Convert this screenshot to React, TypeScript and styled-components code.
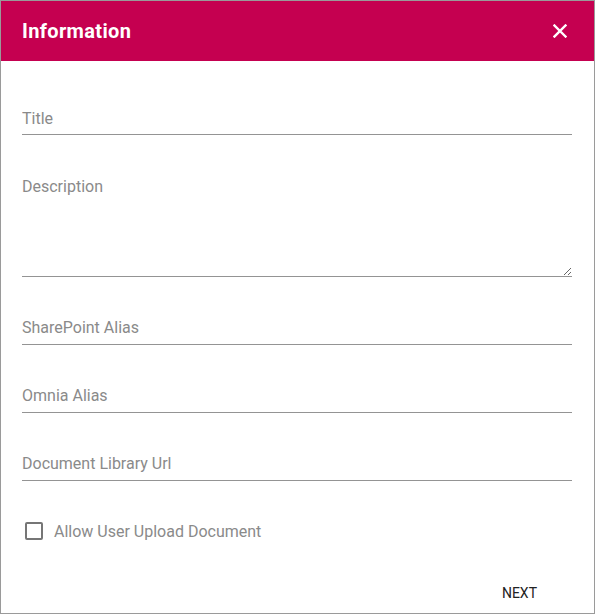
import styled, { createGlobalStyle } from "styled-components";

const GlobalStyle = createGlobalStyle`
    html, body {
        margin: 0;
        padding: 0;
        background: #ffffff;
        font-family: Roboto, "Liberation Sans", sans-serif;
    }
    * {
        box-sizing: border-box;
    }
`;

const fields = ["SharePoint Alias", "Omnia Alias", "Document Library Url"];

const App = () => {
    return (
        <>
            <GlobalStyle />
            <Dialog>
                <Header>
                    <HeaderTitle>Information</HeaderTitle>
                    <CloseBtn aria-label="close">
                        <svg width="14" height="14" viewBox="0 0 14 14">
                            <path
                                d="M1.5 1.5 L12.5 12.5 M12.5 1.5 L1.5 12.5"
                                stroke="#ffffff"
                                strokeWidth="2.4"
                                strokeLinecap="square"
                            />
                        </svg>
                    </CloseBtn>
                </Header>
                <Body>
                    <TextInput type="text" placeholder="Title" $lower />
                    <TextArea placeholder="Description" />
                    {fields.map((f) => (
                        <TextInput key={f} type="text" placeholder={f} />
                    ))}
                    <CheckRow>
                        <CheckBox type="checkbox" />
                        <CheckLabel>Allow User Upload Document</CheckLabel>
                    </CheckRow>
                </Body>
                <Footer>
                    <NextBtn>Next</NextBtn>
                </Footer>
            </Dialog>
        </>
    );
};

export default App;

const Dialog = styled.div`
    display: flex;
    flex-direction: column;
    width: 595px;
    height: 614px;
    border: 1px solid #9a9a9a;
    background: #ffffff;
`;

const Header = styled.div`
    display: flex;
    align-items: center;
    justify-content: space-between;
    height: 60px;
    padding: 0 22px 0 21px;
    background-color: #c50050;
`;

const HeaderTitle = styled.h2`
    margin: 0;
    font-size: 20px;
    font-weight: 700;
    color: #ffffff;
    letter-spacing: 0.35px;
`;

const CloseBtn = styled.button`
    all: unset;
    display: flex;
    align-items: center;
    justify-content: center;
    width: 24px;
    height: 24px;
    cursor: pointer;
`;

const Body = styled.div`
    display: flex;
    flex-direction: column;
    gap: 36px;
    padding: 42px 22px 0 21px;
`;

const inputBase = `
    all: unset;
    display: block;
    width: 100%;
    box-sizing: border-box;
    font-family: Roboto, "Liberation Sans", sans-serif;
    font-size: 16px;
    line-height: 20px;
    color: rgba(0, 0, 0, 0.87);
    border-bottom: 1px solid #949494;

    &::placeholder {
        color: #8a8a8a;
        opacity: 1;
    }
`;

const TextInput = styled.input<{ $lower?: boolean }>`
    ${inputBase}
    height: 32px;
    padding: ${(p) => (p.$lower ? "5px 0 6px" : "4px 0 7px")};
`;

const TextArea = styled.textarea`
    ${inputBase}
    height: 106px;
    padding: 6px 0 0;
    resize: vertical;
`;

const CheckRow = styled.label`
    display: flex;
    align-items: center;
    gap: 11px;
    height: 28px;
    padding-left: 3px;
    cursor: pointer;
`;

const CheckBox = styled.input`
    appearance: none;
    margin: 0;
    width: 18px;
    height: 18px;
    border: 2px solid #767676;
    border-radius: 2px;
    cursor: pointer;
`;

const CheckLabel = styled.span`
    font-size: 16px;
    color: #8a8a8a;
`;

const Footer = styled.div`
    display: flex;
    justify-content: flex-end;
    margin-top: auto;
    padding: 0 41px 2px 0;
`;

const NextBtn = styled.button`
    all: unset;
    height: 36px;
    padding: 0 16px;
    font-family: Roboto, "Liberation Sans", sans-serif;
    font-size: 14px;
    font-weight: 400;
    text-transform: uppercase;
    color: #222222;
    line-height: 36px;
    cursor: pointer;
`;
